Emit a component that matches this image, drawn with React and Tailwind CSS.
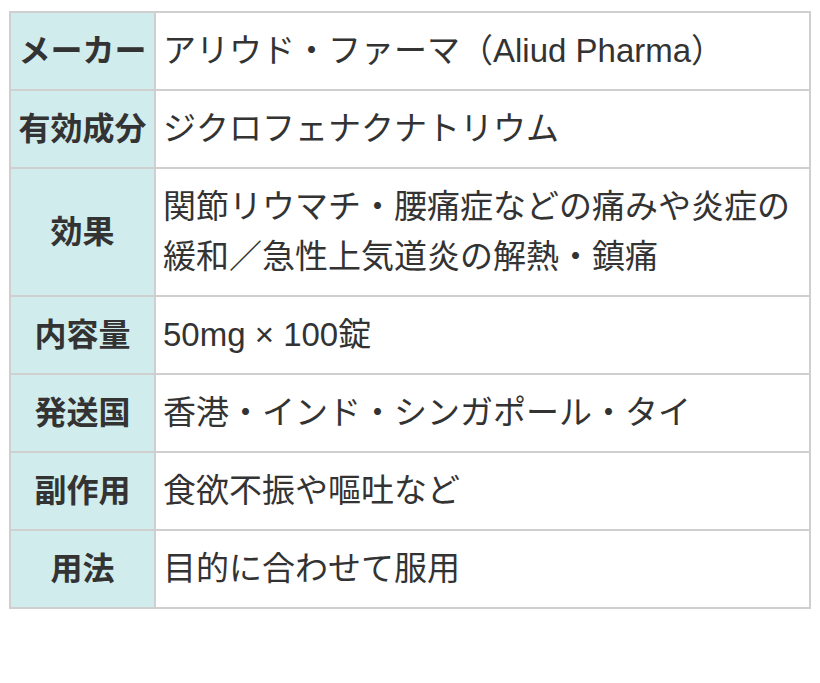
export default function App() {
  const rows = [
    ["メーカー", "アリウド・ファーマ（Aliud Pharma）"],
    ["有効成分", "ジクロフェナクナトリウム"],
    ["効果", "関節リウマチ・腰痛症などの痛みや炎症の緩和／急性上気道炎の解熱・鎮痛"],
    ["内容量", "50mg × 100錠"],
    ["発送国", "香港・インド・シンガポール・タイ"],
    ["副作用", "食欲不振や嘔吐など"],
    ["用法", "目的に合わせて服用"],
  ];
  return (
    <div
      className="w-[820px] h-[683px] bg-white pl-[9px] pt-[11px] text-[#333]"
      style={{ fontFamily: '"Liberation Sans", "Noto Sans CJK JP", sans-serif' }}
    >
      <table className="w-[802px] border-collapse border-2 border-[#cfcfcf]">
        <tbody>
          {rows.map(([k, v]) => (
            <tr key={k}>
              <th className="w-[145px] border-2 border-[#cfcfcf] bg-[#d0ecec] px-[5px] py-[13px] text-center align-middle text-[32px] leading-[50px] font-bold whitespace-nowrap">
                {k}
              </th>
              <td className="border-2 border-[#cfcfcf] px-[7px] py-[13px] text-left align-middle text-[33px] leading-[50px] font-normal">
                {v}
              </td>
            </tr>
          ))}
        </tbody>
      </table>
    </div>
  );
}
